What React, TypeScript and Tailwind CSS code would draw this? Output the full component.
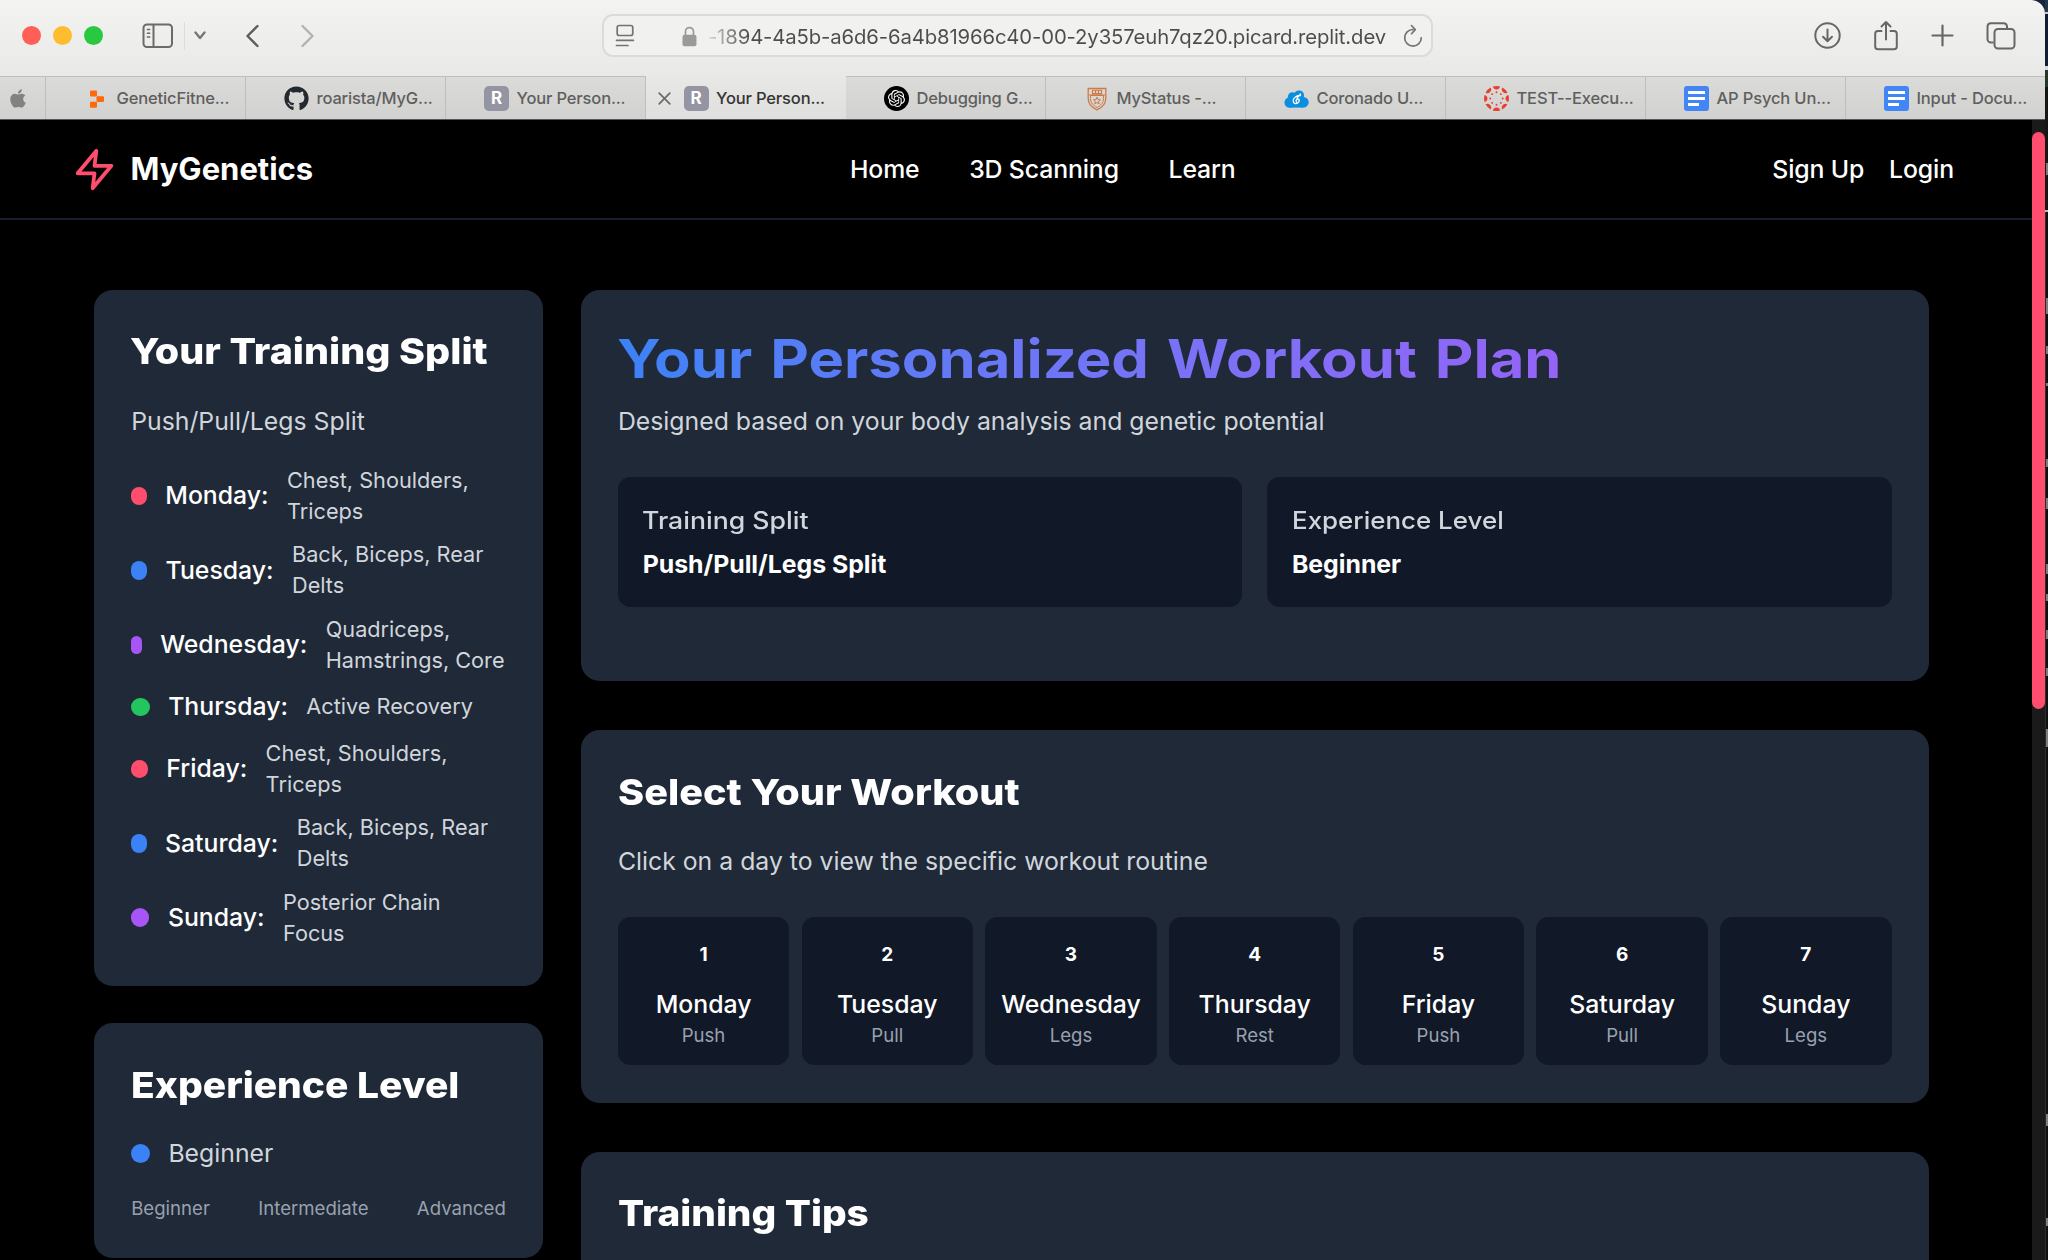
import React from "react";
import { FaApple, FaGithub } from "react-icons/fa";
import { SiOpenai } from "react-icons/si";

/* ---------- favicons ---------- */

const BlocksIcon = () => (
  <svg width="24" height="24" viewBox="0 0 24 24" fill="#fd6a0c">
    <rect x="5" y="3.6" width="7" height="6" rx="1" />
    <rect x="11.5" y="9.3" width="7.5" height="5.8" rx="1" />
    <rect x="5" y="14.8" width="7" height="6" rx="1" />
  </svg>
);

const LetterIcon = () => (
  <span className="flex h-[25px] w-[25px] items-center justify-center rounded-[5px] bg-[#9594a3] text-[17px] font-bold text-white">R</span>
);

const OpenAiIcon = () => (
  <span className="flex h-[25px] w-[25px] items-center justify-center rounded-full bg-black text-[17px] text-white">
    <SiOpenai />
  </span>
);

const ShieldIcon = () => (
  <svg width="20" height="24" viewBox="2 0 20 24" preserveAspectRatio="none" fill="none" stroke="#cf7a45" strokeWidth="1.3">
    <path d="M3.2 1.5H20.8V11C20.8 17 17.5 20.5 12 22.8C6.500 20.5 3.200 17 3.200 11Z" />
    <path d="M5.500 8.500H18.500V11.500C18.500 15.500 16 18.500 12 20.500C8 18.500 5.500 15.500 5.500 11.500Z" strokeWidth="1" />
    <path d="M7.500 3.200H16.500V6.600H7.500ZM10.500 3.200V6.600M13.500 3.200V6.600M4 8H20" strokeWidth="1.100" />
    <path d="M12 10.200L13 12.600L15.500 12.800L13.600 14.400L14.200 16.800L12 15.500L9.800 16.800L10.400 14.400L8.500 12.800L11 12.600Z" strokeWidth="1" />
  </svg>
);

const CloudIcon = () => (
  <svg width="25" height="24" viewBox="0 0 25 24">
    <g fill="#0a8fe0">
      <circle cx="5.800" cy="15.400" r="5.300" />
      <circle cx="8.500" cy="9.800" r="4.600" />
      <circle cx="15" cy="8.400" r="5" />
      <circle cx="19.400" cy="15.300" r="5.300" />
      <rect x="5.800" y="9" width="13.500" height="11.600" />
    </g>
    <path d="M16.500 8.500C14 8 9.500 10 9.200 13.500C9 16.500 12 17.500 14 15.800C15.800 14.300 15.500 12 14 12C12.300 12 11.500 14 12.500 15M13 11L16.500 7" fill="none" stroke="#fff" strokeWidth="1.300" strokeLinecap="round" />
  </svg>
);

const CanvasIcon = () => (
  <svg width="25" height="25" viewBox="0 0 25 25" fill="#e8402f">
    {[0, 45, 90, 135, 180, 225, 270, 315].map((a) => (
      <g key={a} transform={`rotate(${a} 12.5 12.5)`}>
        <path d="M8.900 0.600A12.500 12.500 0 0 1 16.100 0.600A3.700 3.700 0 0 1 8.900 0.600Z" />
        <circle cx="12.500" cy="6.300" r="0.950" />
      </g>
    ))}
  </svg>
);

const DocIcon = () => (
  <span className="flex h-[25px] w-[25px] flex-col justify-center gap-[3px] rounded-[3px] bg-[#4285f4] pl-1">
    <span className="h-[3px] w-[17px] bg-white" />
    <span className="h-[3px] w-[17px] bg-white" />
    <span className="h-[3px] w-[11px] bg-white" />
  </span>
);

const tabs: { title: string; icon: React.ReactNode; active?: boolean }[] = [
  { title: "GeneticFitne...", icon: <BlocksIcon /> },
  { title: "roarista/MyG...", icon: <FaGithub className="h-[25px] w-[25px] text-[#24292f]" /> },
  { title: "Your Person...", icon: <LetterIcon /> },
  { title: "Your Person...", icon: <LetterIcon />, active: true },
  { title: "Debugging G...", icon: <OpenAiIcon /> },
  { title: "MyStatus -...", icon: <ShieldIcon /> },
  { title: "Coronado U...", icon: <CloudIcon /> },
  { title: "TEST--Execu...", icon: <CanvasIcon /> },
  { title: "AP Psych Un...", icon: <DocIcon /> },
  { title: "Input - Docu...", icon: <DocIcon /> },
];

/* ---------- browser chrome ---------- */

function Toolbar() {
  return (
    <div className="flex h-[76px] shrink-0 bg-gradient-to-b from-[#f3f3f1] to-[#e9e9e7] pb-[5px]">
      <div className="flex w-[602px] shrink-0 items-center pl-[21.500px]">
        <div className="flex gap-3">
          <span className="h-[19px] w-[19px] rounded-full bg-[#ff5f57]" />
          <span className="h-[19px] w-[19px] rounded-full bg-[#febc2e]" />
          <span className="h-[19px] w-[19px] rounded-full bg-[#28c840]" />
        </div>
        <svg className="ml-[39px]" width="32" height="26" viewBox="0 0 32 26" fill="none" stroke="#6b6b6a" strokeWidth="2">
          <rect x="1.500" y="1.500" width="28.500" height="22.500" rx="3.500" />
          <path d="M11.500 1.500V24" />
          <path d="M4.800 6.500H8.300M4.800 10.300H8.300M4.800 14.100H8.300" strokeWidth="1.500" />
        </svg>
        <span className="ml-[10px] h-7 w-px bg-[#dcdcda]" />
        <svg className="ml-[9px]" width="12" height="9" viewBox="0 0 12 9" fill="none" stroke="#757574" strokeWidth="2.300" strokeLinecap="round" strokeLinejoin="round">
          <path d="M1.500 1.500L6 7L10.500 1.500" />
        </svg>
        <svg className="ml-[39px]" width="15" height="24" viewBox="0 0 15 24" fill="none" stroke="#5c5c5b" strokeWidth="2.400" strokeLinecap="round" strokeLinejoin="round">
          <path d="M12.500 2L2.500 12L12.500 22" />
        </svg>
        <svg className="ml-[40px]" width="15" height="24" viewBox="0 0 15 24" fill="none" stroke="#b2b2b1" strokeWidth="2.400" strokeLinecap="round" strokeLinejoin="round">
          <path d="M2.500 2L12.500 12L2.500 22" />
        </svg>
      </div>

      <div className="mt-[14px] flex h-[43px] w-[831px] shrink-0 items-center rounded-[11px] border-2 border-[#dbdbd9] bg-[#f1f1ef] pl-[11px] pr-[8px]">
        <svg width="20" height="24" viewBox="0 0 20 24" fill="none" stroke="#737372" strokeWidth="1.700" strokeLinecap="round">
          <rect x="2.200" y="1.500" width="15.600" height="10" rx="2" />
          <path d="M1.500 16.300H18.500M1.500 21.500H13" />
        </svg>
        <svg className="mt-[2px] ml-[47px]" width="15" height="21" viewBox="0 0 15 21">
          <rect x="0.500" y="8.700" width="14" height="11.500" rx="2" fill="#9a9a99" />
          <path d="M3.500 9.500V5.500A4 4 0 0 1 11.500 5.500V9.500" fill="none" stroke="#9a9a99" strokeWidth="1.700" />
        </svg>
        <span className="ml-[11px] mt-[3px] w-[690px] whitespace-nowrap bg-gradient-to-r from-[#d8d8d7] via-[#4c4c4b] via-[6%] to-[#4c4c4b] bg-clip-text text-[20.300px] tracking-[-0.120px] text-transparent">
          -1894-4a5b-a6d6-6a4b81966c40-00-2y357euh7qz20.picard.replit.dev
        </span>
        <svg className="ml-[7px] mt-px" width="20" height="24" viewBox="0 0 20 24" fill="none" stroke="#737372" strokeWidth="1.700" strokeLinecap="round" strokeLinejoin="round">
          <path d="M9.500 5.500H10A8.300 8.300 0 1 0 18.300 13.800" />
          <path d="M8.500 1.500L12.300 5.600L8.500 9.700" />
        </svg>
      </div>

      <div className="flex flex-1 items-center justify-end pr-[29px]">
        <svg width="27" height="27" viewBox="0 0 27 27" fill="none" stroke="#676766" strokeWidth="2" strokeLinecap="round" strokeLinejoin="round">
          <circle cx="13.500" cy="13.500" r="12.200" />
          <path d="M13.500 7.500V19M9 14.800L13.500 19.300L18 14.800" />
        </svg>
        <svg className="ml-[32px]" width="26" height="32" viewBox="0 0 26 32" fill="none" stroke="#676766" strokeWidth="2" strokeLinecap="round" strokeLinejoin="round">
          <path d="M8.500 11H5A2.800 2.800 0 0 0 2.200 13.800V26.500A2.800 2.800 0 0 0 5 29.300H21A2.800 2.800 0 0 0 23.800 26.500V13.800A2.800 2.800 0 0 0 21 11H17.500" />
          <path d="M13 19.500V2.500M8.500 6.500L13 2L17.500 6.500" />
        </svg>
        <svg className="ml-[32px]" width="23" height="23" viewBox="0 0 23 23" fill="none" stroke="#676766" strokeWidth="2.200" strokeLinecap="round">
          <path d="M11.500 1.500V21.500M1.500 11.500H21.500" />
        </svg>
        <svg className="ml-[32px]" width="30" height="28" viewBox="0 0 30 28" fill="none" stroke="#676766" strokeWidth="2" strokeLinejoin="round">
          <rect x="8.500" y="7" width="20" height="19.500" rx="3.500" />
          <path d="M7.500 20.500H5A3.500 3.500 0 0 1 1.500 17V4.500A3.500 3.500 0 0 1 5 1.200H17.500A3.500 3.500 0 0 1 21 4.500V6" />
        </svg>
      </div>
    </div>
  );
}

function TabBar() {
  return (
    <div className="flex h-[43.500px] shrink-0 border-b border-[#555] bg-gradient-to-b from-[#dbdbd9] to-[#d1d1cf]">
      <div className="flex w-[46px] shrink-0 items-center border-r border-t border-[#bebebc] pl-[8px] pt-[2px]">
        <FaApple className="h-[21px] w-[20px] text-[#828281]" />
      </div>
      {tabs.map((t, i) =>
        t.active ? (
          <div key={i} className="flex w-[200px] shrink-0 items-center bg-gradient-to-b from-[#e8e8e6] to-[#dfdfdd] pt-[3px] text-[#353534]">
            <svg className="ml-[12px]" width="13" height="13" viewBox="0 0 13 13" stroke="#6a6a69" strokeWidth="1.700" strokeLinecap="round">
              <path d="M1.200 1.200L11.800 11.800M11.800 1.200L1.200 11.800" />
            </svg>
            <span className="ml-[12.500px]">{t.icon}</span>
            <span className="ml-[7.500px] whitespace-nowrap text-[16.500px] font-medium tracking-[-0.150px]">{t.title}</span>
          </div>
        ) : (
          <div key={i} className={`flex w-[200px] shrink-0 items-center border-t border-[#bebebc] pt-[2px] text-[#5f5f5e] ${i === 9 ? "" : "border-r"}`}>
            <span className="ml-[38px] flex w-[25px] shrink-0 justify-center">{t.icon}</span>
            <span className="ml-[7.500px] whitespace-nowrap text-[16.500px] font-medium tracking-[-0.150px]">{t.title}</span>
          </div>
        )
      )}
    </div>
  );
}

/* ---------- page ---------- */

function Nav() {
  return (
    <nav className="flex h-[100.500px] shrink-0 items-center border-b-2 border-[#181e2b] pl-[72px] pr-[78px] text-[24.800px] font-medium tracking-[-0.120px] text-white">
      <div className="flex w-[778px] shrink-0 items-center gap-[13.500px] text-[31px] font-bold tracking-normal">
        <svg className="mt-px" width="45" height="45" viewBox="0 0 24 24" fill="none" stroke="#ff4d6d" strokeWidth="2" strokeLinecap="round" strokeLinejoin="round">
          <polygon points="13 2 3 14 12 14 11 22 21 10 12 10 13 2" />
        </svg>
        <span>MyGenetics</span>
      </div>
      <div className="mt-[2px] flex gap-[49.600px]">
        <span>Home</span>
        <span>3D Scanning</span>
        <span>Learn</span>
      </div>
      <div className="ml-auto mt-[2px] flex gap-[24.800px]">
        <span>Sign Up</span>
        <span>Login</span>
      </div>
    </nav>
  );
}

const schedule = [
  { day: "Monday", lines: ["Chest, Shoulders,", "Triceps"], dot: "w-[15.700px] bg-[#ff4d6d]", type: "Push" },
  { day: "Tuesday", lines: ["Back, Biceps, Rear", "Delts"], dot: "w-[16px] bg-[#3b82f6]", type: "Pull" },
  { day: "Wednesday", lines: ["Quadriceps,", "Hamstrings, Core"], dot: "w-[10.600px] bg-[#a855f7]", type: "Legs" },
  { day: "Thursday", lines: ["Active Recovery"], dot: "w-[18.600px] bg-[#22c55e]", type: "Rest" },
  { day: "Friday", lines: ["Chest, Shoulders,", "Triceps"], dot: "w-[16.700px] bg-[#ff4d6d]", type: "Push" },
  { day: "Saturday", lines: ["Back, Biceps, Rear", "Delts"], dot: "w-[15.400px] bg-[#3b82f6]", type: "Pull" },
  { day: "Sunday", lines: ["Posterior Chain", "Focus"], dot: "w-[18.300px] bg-[#a855f7]", type: "Legs" },
];

const card = "rounded-[18.600px] bg-[#1f2937] p-[37.200px]";
const heading = "origin-left whitespace-nowrap text-[36px] leading-[49.600px] font-extrabold text-white";

function Sidebar() {
  return (
    <aside className="flex w-[449px] shrink-0 flex-col gap-[37.200px]">
      <section className={`${card} pb-[37.600px]`}>
        <h2 className={`${heading} -ml-px scale-x-[1.095]`}>Your Training Split</h2>
        <p className="mt-[26px] text-[24.800px] leading-[37.200px] text-gray-300">Push/Pull/Legs Split</p>
        <ul className="mt-[24.800px] flex flex-col gap-[12.400px]">
          {schedule.map((s) => (
            <li key={s.day} className="flex items-center gap-[18.400px]">
              <span className={`h-[18.600px] shrink-0 rounded-full ${s.dot}`} />
              <span className="text-[24.800px] leading-[37.200px] font-medium text-white">{s.day}:</span>
              <span className="whitespace-nowrap text-[21.700px] leading-[31px] text-gray-300">
                {s.lines.map((l) => (
                  <span key={l} className="block">{l}</span>
                ))}
              </span>
            </li>
          ))}
        </ul>
      </section>
      <section className={card}>
        <h2 className={`${heading} scale-x-[1.082]`}>Experience Level</h2>
        <div className="mt-[24.800px] flex items-center gap-[18.600px]">
          <span className="h-[18.600px] w-[18.600px] rounded-full bg-[#3b82f6]" />
          <span className="text-[24.800px] leading-[37.200px] text-gray-300">Beginner</span>
        </div>
        <div className="mt-[24.300px] flex justify-between text-[18.600px] leading-[24.800px] text-gray-400">
          <span>Beginner</span>
          <span>Intermediate</span>
          <span>Advanced</span>
        </div>
      </section>
    </aside>
  );
}

function Main() {
  return (
    <main className="flex w-[1348px] shrink-0 flex-col gap-[49.600px]">
      <section className={`${card} h-[390.500px] shrink-0`}>
        <h1 className="-ml-px w-[1153px] origin-left scale-x-[1.106] whitespace-nowrap bg-gradient-to-r from-[#3b82f6] to-[#a855f7] bg-clip-text pt-px text-[54px] leading-[61px] font-bold text-transparent [word-spacing:3.500px]">
          Your Personalized Workout Plan
        </h1>
        <p className="mt-[13.500px] text-[24.800px] leading-[37.200px] text-gray-300">
          Designed based on your body analysis and genetic potential
        </p>
        <div className="mt-[36.800px] grid grid-cols-2 gap-[24.800px]">
          <div className="h-[130px] rounded-[12.400px] bg-[#111827] p-[24.800px]">
            <h3 className="-ml-px origin-left scale-x-[1.110] text-[24px] leading-[37.200px] font-medium text-gray-300">Training Split</h3>
            <p className="mt-[7.200px] text-[24.800px] leading-[37.200px] font-bold text-white">Push/Pull/Legs Split</p>
          </div>
          <div className="h-[130px] rounded-[12.400px] bg-[#111827] p-[24.800px]">
            <h3 className="origin-left scale-x-[1.080] text-[24px] leading-[37.200px] font-medium text-gray-300">Experience Level</h3>
            <p className="mt-[7.200px] text-[24.800px] leading-[37.200px] font-bold text-white">Beginner</p>
          </div>
        </div>
      </section>

      <section className={`${card} shrink-0`}>
        <h2 className={`${heading} scale-x-[1.101]`}>Select Your Workout</h2>
        <p className="mt-[26px] text-[24.800px] leading-[37.200px] text-gray-300">
          Click on a day to view the specific workout routine
        </p>
        <div className="mt-[36.500px] grid grid-cols-7 gap-[12.400px]">
          {schedule.map((s, i) => (
            <div key={s.day} className="flex h-[148.500px] flex-col items-center rounded-[12.400px] bg-[#111827] pt-[19px]">
              <span className="text-[19px] leading-[37.200px] font-bold text-white">{i + 1}</span>
              <span className="mt-[12.800px] text-[24.800px] leading-[37.200px] font-medium text-white">{s.day}</span>
              <span className="text-[18.600px] leading-[24.800px] text-gray-400">{s.type}</span>
            </div>
          ))}
        </div>
      </section>

      <section className={`${card} h-[300px] shrink-0`}>
        <h2 className={`${heading} scale-x-[1.076]`}>Training Tips</h2>
      </section>
    </main>
  );
}

/* Marks on the sliver of the window behind. */
const marks = [
  "top-[163px] h-[12px]", "top-[298px] h-[16px]", "top-[346px] h-[8px]", "top-[383px] h-[3px]",
  "top-[459px] h-[8px]", "top-[498px] h-[11px]", "top-[564px] h-[10px]", "top-[594px] h-[7px]",
  "top-[630px] h-[9px]", "top-[668px] h-[8px]", "top-[729px] h-[18px]", "top-[1114px] h-[12px]",
  "top-[1218px] h-[8px]",
];

export default function App() {
  return (
    <div className="flex h-[1260px] w-[2048px] overflow-hidden bg-[#16263a] font-['Inter',sans-serif]">
      <div className="flex w-[2045px] shrink-0 flex-col overflow-hidden rounded-tr-[14px] bg-black">
        <Toolbar />
        <TabBar />
        <div className="flex min-h-0 flex-1">
          <div className="flex w-[2032px] shrink-0 flex-col overflow-hidden">
            <Nav />
            <div className="flex min-h-0 flex-1 gap-[37.700px] overflow-hidden pl-[94px] pt-[70.300px]">
              <Sidebar />
              <Main />
            </div>
          </div>
          <div className="flex-1 bg-[#1a1a1a] pt-[12.500px]">
            <div className="h-[577px] rounded-full bg-[#ff4d6d]" />
          </div>
        </div>
      </div>
      <div className="relative flex-1 overflow-hidden">
        <div className="h-[12px] bg-[#24344a]" />
        <div className="h-[2px] bg-[#c9c9c9]" />
        <div className="h-[52px] bg-[#101d33]" />
        <div className="h-[4px] bg-[#d8d8d8]" />
        <div className="h-[17px] bg-[#26382a]" />
        <div className="h-[123px] bg-[#151515]" />
        <div className="h-[2px] bg-[#bdbdbd]" />
        <div className="h-[1048px] border-l border-[#2c2c2c] bg-[#101010]" />
        {marks.map((m) => (
          <span key={m} className={`absolute right-0 w-[2px] bg-[#7d7d7d] ${m}`} />
        ))}
      </div>
    </div>
  );
}
